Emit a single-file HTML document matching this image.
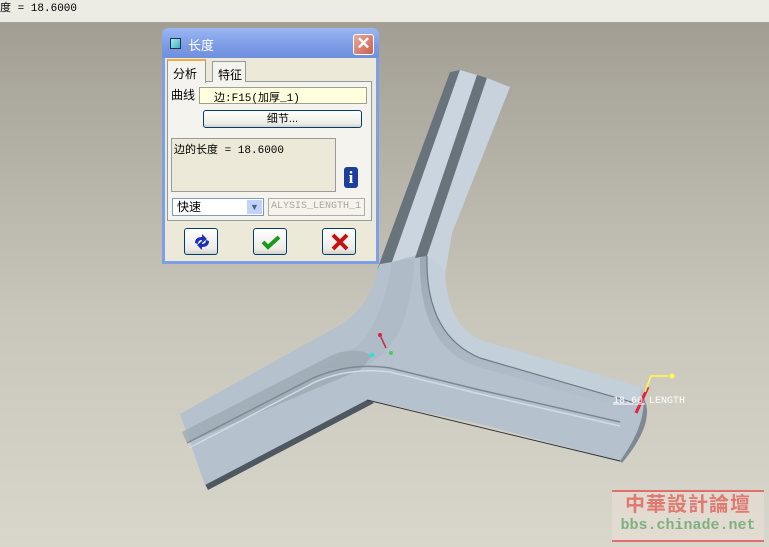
<!DOCTYPE html>
<html><head><meta charset="utf-8">
<style>
*{margin:0;padding:0;box-sizing:border-box}
body{width:769px;height:547px;overflow:hidden;position:relative;font-family:"Liberation Sans","Noto Sans CJK SC",sans-serif;font-size:12px;
background:linear-gradient(180deg,#a29e94 22px,#b3b0a5 150px,#c9c6bb 320px,#d9d6cc 547px)}
#top{position:absolute;left:0;top:0;width:769px;height:22px;background:#ecebe4;font-family:"Liberation Mono","Noto Sans CJK SC",monospace;font-size:11px;line-height:18px;color:#000}
#dlg{position:absolute;left:162px;top:28px;width:217px;height:236px;background:#7e9ee8;border-radius:6px 6px 0 0;}
#tb{position:absolute;left:0;top:0;width:217px;height:30px;border-radius:6px 6px 0 0;background:linear-gradient(180deg,#9ab6f2,#7b9be6 60%,#7090de)}
#tb .ic{position:absolute;left:8px;top:10px;width:11px;height:11px;background:linear-gradient(135deg,#a0f0f0,#40b0c0);border:1px solid #234}
#tb .t{position:absolute;left:26px;top:7px;color:#fff;font-size:13px}
#tb .x{position:absolute;left:191px;top:6px;width:21px;height:21px;border:1px solid #fff;border-radius:3px;background:linear-gradient(135deg,#e8a8a0,#c86050);color:#fff;font-size:17px;line-height:18px;text-align:center;font-weight:bold}
#body{position:absolute;left:3px;top:30px;width:211px;height:203px;background:#ece9d8}
.tab{position:absolute;top:3px;height:21px;border:1px solid #919b9c;border-bottom:none;font-size:12px;padding:4px 0 0 5px;background:#f4f3ee}
#panel{position:absolute;left:2px;top:23px;width:205px;height:140px;border:1px solid #919b9c;background:#f4f3ee}
.abs{position:absolute}
.btn{position:absolute;top:170px;width:34px;height:27px;border:1px solid #003c74;border-radius:3px;background:linear-gradient(180deg,#fff,#ecebe6 80%,#d6d0c5)}
.btn svg{position:absolute;left:6px;top:4px}
</style></head><body>
<div id="top">度 = 18.6000</div>

<svg width="769" height="547" style="position:absolute;left:0;top:0">
<defs>
<linearGradient id="sh" x1="0" y1="0" x2="0" y2="1"><stop offset="0" stop-color="#8b97a2"/><stop offset="1" stop-color="#b5c1cc"/></linearGradient>
</defs>
<polygon points="205,484 367,399 374,403 208,490" fill="#4f5861"/>
<path d="M638,390 Q662,415 622,463 L612,455 Z" fill="#7e8993"/>
<path d="M450,72 L460,70 L510,87 L452,233 L445,275 Q447,330 487,342 L642,387 Q650,420 620,461 L480,424 L367,400 L205,485 L180,414 L340,325 Q372,305 377,268 L380,262 Z" fill="#b5c1cc"/>
<polygon points="450,72 460,70 392,262 380,264 377,270" fill="#69737c"/>
<polygon points="460,70 477,75 417,255 392,262" fill="#cad5df"/>
<polygon points="477,75 487,78 427,256 415,258" fill="#69737c"/>
<polygon points="487,78 510,87 452,233 445,275 428,262 427,256" fill="#c7d2dc"/>
<path d="M445,270 Q447,330 487,342 L642,387 L638,404 L480,358 Q425,335 427,256 Z" fill="#c3cfd9"/>
<path d="M427,256 Q425,335 480,358 L638,404 L636,412 L475,366 Q418,345 420,258 Z" fill="url(#sh)" opacity="0.6"/>
<path d="M427,256 Q425,335 480,358 L638,404" stroke="#707b85" stroke-width="1.2" fill="none"/>
<path d="M392,262 Q382,325 355,348 L320,368 L362,368 Q388,356 402,325 Q412,295 415,258 Z" fill="#a9b5c0" opacity="0.5"/>
<path d="M182,432 L330,356 Q355,345 372,356 L360,370 L187,443 Z" fill="#9aa6b1" opacity="0.7"/>
<path d="M187,443 L313,378 Q350,362 390,368 L480,390 L620,422" stroke="#7c8893" stroke-width="1.5" fill="none"/>
<path d="M189,448 L315,382 Q350,367 390,372 L480,394 L620,426" stroke="#d3dbe3" stroke-width="1.5" fill="none"/>
<path d="M367,400 L620,461" stroke="#2f353a" stroke-width="1"/>
<line x1="380" y1="335" x2="386" y2="348" stroke="#c03040" stroke-width="1.5"/>
<circle cx="380" cy="335" r="2" fill="#e02040"/>
<circle cx="372" cy="355" r="2.3" fill="#30e0e0"/>
<circle cx="391" cy="353" r="2" fill="#40d060"/>
<line x1="636" y1="413" x2="648" y2="387" stroke="#e02040" stroke-width="3"/>
<polyline points="645,392 651,376 668,376" stroke="#ffff40" stroke-width="1.5" fill="none"/>
<circle cx="672" cy="376" r="2.5" fill="#ffff40"/>
<text x="613" y="403" fill="#fff" font-family="Liberation Mono,monospace" font-size="10">18.60 LENGTH</text>
<line x1="613" y1="404" x2="645" y2="404" stroke="#fff" stroke-width="1"/>
</svg>

<div id="dlg">
 <div id="tb"><div class="ic"></div><div class="t">长度</div><div class="x">✕</div></div>
 <div id="body">
  <div id="panel">
   <div class="abs" style="left:3px;top:4px">曲线</div>
   <div class="abs" style="left:31px;top:5px;width:168px;height:17px;background:#ffffe0;border:1px solid #a0a090;font-size:11px;padding:1px 0 0 14px;font-family:'Liberation Mono','Noto Sans CJK SC',monospace">边:F15(加厚_1)</div>
   <div class="abs" style="left:35px;top:28px;width:159px;height:18px;border:1px solid #003c74;border-radius:3px;background:linear-gradient(180deg,#fff,#ecebe6 80%,#d6d0c5);text-align:center;font-size:11px;line-height:16px">细节...</div>
   <div class="abs" style="left:3px;top:56px;width:165px;height:54px;border:1px solid #9a9a9a;background:#ece9d8;font-size:11px;padding:2px;font-family:'Liberation Mono','Noto Sans CJK SC',monospace">边的长度 = 18.6000</div>
   <div class="abs" style="left:176px;top:85px;width:14px;height:21px;background:#1b3f9a;border-radius:3px;color:#fff;font-weight:bold;font-family:'Liberation Serif',serif;font-size:17px;line-height:21px;text-align:center">i</div>
   <div class="abs" style="left:4px;top:116px;width:92px;height:18px;border:1px solid #7f9db9;background:#fff;font-size:12px;padding-left:4px;line-height:16px">快速
    <div class="abs" style="right:1px;top:1px;width:15px;height:14px;background:#c1d3fb;color:#4d6185;font-size:9px;text-align:center;line-height:14px">▼</div></div>
   <div class="abs" style="left:100px;top:116px;width:97px;height:18px;border:1px solid #b0aea0;color:#aaa698;font-size:10px;padding-left:2px;line-height:16px;font-family:'Liberation Mono',monospace;overflow:hidden;white-space:nowrap">ALYSIS_LENGTH_1</div>
  </div>
  <div class="tab" style="left:47px;width:34px;">特征</div>
  <div class="tab" style="left:2px;top:1px;height:24px;width:39px;background:#f4f3ee;border-top:2px solid #f0b040">分析</div>
  <div class="btn" style="left:19px"><svg width="22" height="18" viewBox="0 0 22 18"><path d="M4,10 Q4,4 11,4 L11,1 L16,6 L11,10 L11,7 Q7,7 7,11 Z" fill="#1c2fb8"/><path d="M18,8 Q18,14 11,14 L11,17 L6,12 L11,8 L11,11 Q15,11 15,7 Z" fill="#1c2fb8"/></svg></div>
  <div class="btn" style="left:88px"><svg width="22" height="18" viewBox="0 0 22 18"><path d="M3,9 L8,14 L19,4" stroke="#1a9a1a" stroke-width="4" fill="none"/></svg></div>
  <div class="btn" style="left:157px"><svg width="22" height="18" viewBox="0 0 22 18"><path d="M4,2 L18,16 M18,2 L4,16" stroke="#c01414" stroke-width="4" fill="none"/></svg></div>
 </div>
</div>

<div class="abs" style="left:612px;top:490px;width:152px;height:52px;background:rgba(235,225,215,0.5);border-top:2px solid #e07070;border-bottom:2px solid #e07070">
 <div style="color:#e07a70;font-size:20px;font-weight:bold;text-align:center;line-height:24px;margin-top:1px;letter-spacing:1px">中華設計論壇</div>
 <div style="color:#80b080;font-size:15px;font-weight:bold;text-align:center;font-family:'Liberation Mono',monospace;line-height:18px">bbs.chinade.net</div>
</div>
</body></html>
